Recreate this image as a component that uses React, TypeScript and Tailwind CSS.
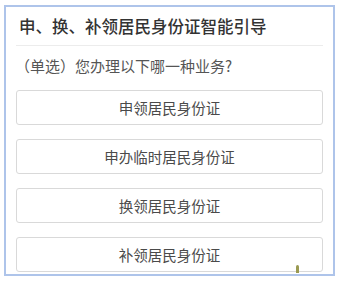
const options = ["申领居民身份证", "申办临时居民身份证", "换领居民身份证", "补领居民身份证"];

export default function App() {
  return (
    <div
      className="relative h-[283px] w-[341px] overflow-hidden bg-white"
      style={{ fontFamily: '"Noto Sans CJK SC", "Noto Sans", sans-serif' }}
    >
      <div className="ml-[4px] mt-[5px] h-[271px] w-[331px] overflow-hidden border-2 border-[#aec4ea] bg-white">
        <div className="flex h-[38px] items-center pl-[13px] text-[16.5px] font-medium text-[#333]">
          申、换、补领居民身份证智能引导
        </div>
        <div className="mx-[10px] h-px bg-[#ececec]" />
        <div className="flex h-[40px] items-center pl-[9px] text-[15px] text-[#555]">
          （单选）您办理以下哪一种业务?
        </div>
        <div className="mx-[10px] flex flex-col gap-[14px] pt-[4px]">
          {options.map((label) => (
            <div
              key={label}
              className="flex h-[35px] shrink-0 items-center justify-center rounded-[3px] border border-[#d9d9d9] bg-white text-[14.5px] text-[#4a4a4a]"
            >
              {label}
            </div>
          ))}
        </div>
      </div>
      <div className="absolute left-[296px] top-[265px] h-[8px] w-[3px] rounded-t-full bg-[#9a9a52]" />
    </div>
  );
}
